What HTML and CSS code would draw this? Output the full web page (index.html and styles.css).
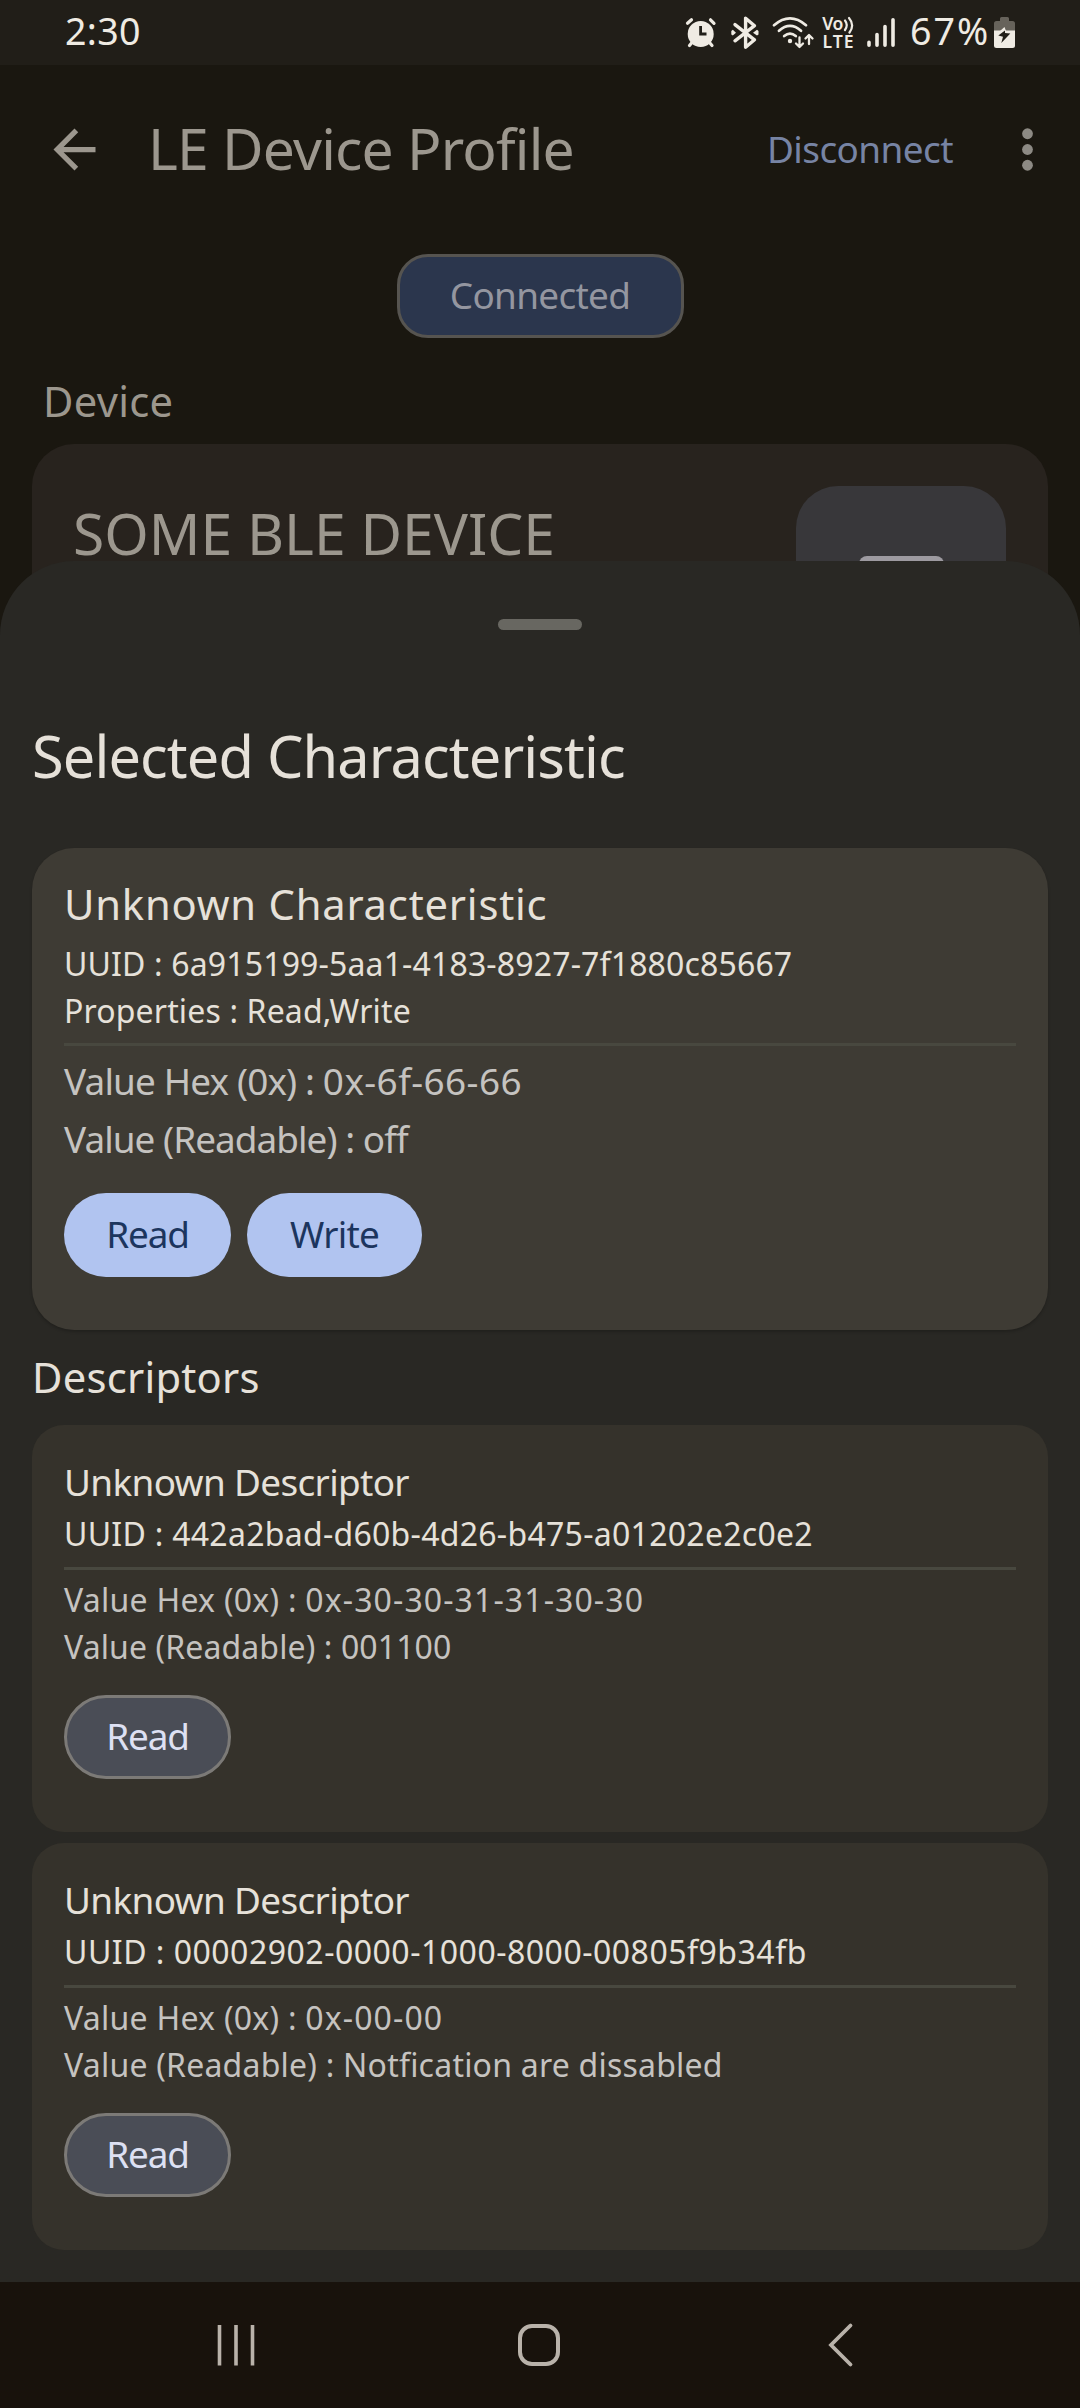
FILE: index.html
```
<!DOCTYPE html>
<html lang="en">
<head>
<meta charset="utf-8">
<title>LE Device Profile</title>
<link rel="stylesheet" href="styles.css">
</head>
<body>
<div class="screen">
  <div class="status-bar">
    <span class="clock">2:30</span>
    <div class="status-icons">
      <svg class="alarm" width="33" height="65" viewBox="684 0 33 65">
        <circle cx="700.7" cy="34" r="13" fill="#efebe3"/>
        <path d="M687.5 23.3 691.5 19.8M710.5 19.8 714 23.3M689.5 45.5 692 42.5M712 45.5 709.5 42.5" stroke="#efebe3" stroke-width="3.2" stroke-linecap="round"/>
        <path d="M700.6 26V34H706.5" fill="none" stroke="#211e18" stroke-width="2.8"/>
      </svg>
      <svg class="bluetooth" width="32" height="65" viewBox="729 0 32 65">
        <path d="M735 40.8 754.5 25.7 745.6 18.2V47.2L754.5 39.8 735 24.6" fill="none" stroke="#efebe3" stroke-width="3.4" stroke-linejoin="round" stroke-linecap="round"/>
        <path d="M731.3 31 732.8 29.8 736 32.7 732.8 35.6 731.3 34.4ZM758.5 31 757 29.8 753 32.7 757 35.6 758.5 34.4Z" fill="#efebe3"/>
      </svg>
      <svg class="wifi" width="44" height="65" viewBox="772 0 44 65" fill="none" stroke="#efebe3" stroke-width="2.8" stroke-linecap="round" stroke-linejoin="round">
        <path d="M774 25.2Q790 11.5 806 25.2M779 30.8Q790 21 801 30.8M784.2 36Q790 31.3 795.8 36"/>
        <circle cx="790" cy="41" r="2.2" fill="#efebe3" stroke="none"/>
        <path d="M799.5 37.5V46.5M796 43.5 799.5 47 803 43.5M809 44V35.5M805.5 38.5 809 35 812.5 38.5" stroke-width="2.3"/>
      </svg>
      <svg class="volte" width="36" height="65" viewBox="820 0 36 65">
        <g class="volte-text"><text x="822.3" y="30.4" textLength="21">Vo</text><text x="822.6" y="48" textLength="31">LTE</text></g>
        <path d="M845 20.5Q848.5 25 845 30M849 18Q855 25 849.5 32.5" fill="none" stroke="#efebe3" stroke-width="2.2" stroke-linecap="round"/>
      </svg>
      <svg class="signal" width="32" height="65" viewBox="865 0 32 65" stroke="#efebe3" stroke-width="3.6" stroke-linecap="round">
        <path d="M869 42.3V45.3M877 34.5V45.3M885 26.5V45.3M893 19.8V45.3"/>
      </svg>
      <span class="percent">67%</span>
      <svg class="battery" width="23" height="65" viewBox="993 0 23 65">
        <path d="M1001.500 17H1007.500A1.500 1.500 0 0 1 1009 18.500V21H1012.500A2.500 2.500 0 0 1 1015 23.500V31H994V23.500A2.500 2.500 0 0 1 996.500 21H1000V18.500A1.500 1.500 0 0 1 1001.500 17Z" fill="#67635b"/>
        <path d="M994 30.500H1015V45.500A2.500 2.500 0 0 1 1012.500 48H996.500A2.500 2.500 0 0 1 994 45.500Z" fill="#efebe3"/>
        <path d="M1004.500 27 1000 31H1006Z" fill="#efebe3"/>
        <path d="M1005 30.500 998.300 35.500 1003 36.700 1001.300 43 1010.300 33.500 1005 33Z" fill="#211e18"/>
      </svg>
    </div>
  </div>

  <div class="app-bar">
    <svg class="back" width="63" height="63" viewBox="0 0 24 24"><path d="M20 11H7.830l5.590-5.590L12 4l-8 8 8 8 1.410-1.410L7.830 13H20v-2z" fill="#9c978e"/></svg>
    <h1 class="app-title">LE Device Profile</h1>
    <span class="disconnect">Disconnect</span>
    <svg class="more" width="63" height="63" viewBox="0 0 24 24" fill="#8d8a84"><circle cx="12" cy="6" r="2.050"/><circle cx="12" cy="12" r="2.050"/><circle cx="12" cy="18" r="2.050"/></svg>
  </div>

  <div class="content">
    <div class="chip">Connected</div>
    <div class="section">Device</div>
    <div class="device-card">
      <div class="device-name">SOME BLE DEVICE</div>
      <div class="device-icon"><div class="device-glyph"></div></div>
    </div>
  </div>

  <div class="sheet">
    <div class="handle"></div>
    <h2 class="sheet-title">Selected Characteristic</h2>

    <div class="card characteristic">
      <div class="char-name">Unknown Characteristic</div>
      <div class="small uuid">UUID : 6a915199-5aa1-4183-8927-7f1880c85667</div>
      <div class="small props">Properties : Read,Write</div>
      <div class="rule"></div>
      <div class="value hex">Value Hex (0x) : <span class="bytes">0x-6f-66-66</span></div>
      <div class="value readable">Value (Readable) : off</div>
      <div class="actions">
        <button class="btn filled">Read</button>
        <button class="btn filled write">Write</button>
      </div>
    </div>

    <div class="descriptors-label">Descriptors</div>

    <div class="descriptors">
      <div class="card descriptor">
        <div class="desc-name">Unknown Descriptor</div>
        <div class="small desc-uuid">UUID : 442a2bad-d60b-4d26-b475-a01202e2c0e2</div>
        <div class="rule"></div>
        <div class="small desc-hex">Value Hex (0x) : <span class="bytes">0x-30-30-31-31-30-30</span></div>
        <div class="small desc-readable">Value (Readable) : 001100</div>
        <div class="actions"><button class="btn tonal">Read</button></div>
      </div>
      <div class="card descriptor">
        <div class="desc-name">Unknown Descriptor</div>
        <div class="small desc-uuid zeros">UUID : 00002902-0000-1000-8000-00805f9b34fb</div>
        <div class="rule"></div>
        <div class="small desc-hex">Value Hex (0x) : <span class="bytes">0x-00-00</span></div>
        <div class="small desc-readable text">Value (Readable) : Notfication are dissabled</div>
        <div class="actions"><button class="btn tonal">Read</button></div>
      </div>
    </div>
  </div>

  <div class="nav-bar">
    <svg width="42" height="46" viewBox="0 0 42 46" stroke="#b9b2aa" stroke-width="3.600"><path d="M4.500 3V43.500M21 3V43.500M37.500 3V43.500"/></svg>
    <svg width="42" height="46" viewBox="0 0 42 46" fill="none" stroke="#b9b2aa" stroke-width="4"><rect x="2" y="4" width="38" height="38" rx="12"/></svg>
    <svg width="42" height="46" viewBox="0 0 42 46" fill="none" stroke="#b9b2aa" stroke-width="3.800" stroke-linecap="round"><path d="M30.500 3.500 11 23 30.500 42.500"/></svg>
  </div>
</div>
</body>
</html>
```
FILE: styles.css
```
* { box-sizing: border-box; }

body {
  margin: 0;
  background: #1a1710;
  font-family: "Noto Sans", "Open Sans", sans-serif;
  font-weight: 400;
}

h1, h2 { margin: 0; font-weight: 400; }
svg { display: block; flex: none; }

.screen {
  position: relative;
  width: 1080px;
  height: 2408px;
  overflow: hidden;
  display: flex;
  flex-direction: column;
  background: #1a1710;
  white-space: nowrap;
}

/* Status bar */
.status-bar {
  height: 65px;
  padding: 0 64px 0 65px;
  display: flex;
  justify-content: space-between;
  background: #211e18;
  color: #efebe3;
  flex: none;
}
.clock { font-size: 37.6px; line-height: 61px; letter-spacing: 0.33px; }
.status-icons { display: flex; }
.bluetooth { margin-left: 12px; }
.wifi { margin-left: 11px; }
.volte { margin-left: 4px; }
.signal { margin-left: 9px; }
.volte-text { font-size: 17.6px; font-weight: 600; fill: #efebe3; }
.percent {
  width: 96px;
  padding-left: 13px;
  font-size: 37.6px;
  line-height: 61px;
  letter-spacing: 2px;
}

/* App bar */
.app-bar {
  height: 169px;
  flex: none;
  padding: 0 21px 0 43px;
  display: flex;
  align-items: center;
}
.app-title {
  margin-left: 42px;
  padding-bottom: 4px;
  font-size: 57px;
  line-height: 72px;
  letter-spacing: -0.8px;
  color: #9c978e;
  flex: 1;
}
.disconnect {
  padding-bottom: 2px;
  margin-right: 43px;
  font-size: 36.9px;
  line-height: 52px;
  letter-spacing: -0.55px;
  color: #7784a4;
}

/* Content behind the sheet */
.content { padding: 20px 32px 0; display: flex; flex-direction: column; flex: 1; }
.chip {
  align-self: center;
  width: 287px;
  height: 84px;
  padding-bottom: 2px;
  display: flex;
  align-items: center;
  justify-content: center;
  border: 3px solid #565450;
  border-radius: 31px;
  background: #2b364d;
  color: #9496a0;
  font-size: 36.9px;
  letter-spacing: -0.7px;
}
.section {
  margin: 35px 0 15px 11px;
  font-size: 41.7px;
  line-height: 56px;
  letter-spacing: 0.3px;
  color: #9c978e;
}
.device-card {
  height: 300px;
  padding: 42px 42px 0 41px;
  display: flex;
  justify-content: space-between;
  background: #28231e;
  border-radius: 42px;
}
.device-name {
  margin-top: 11px;
  font-size: 57px;
  line-height: 72px;
  color: #9c978e;
}
.device-icon {
  width: 210px;
  height: 210px;
  padding: 70px 62px 0 63px;
  background: #38373a;
  border-radius: 42px;
}
.device-glyph { height: 70px; border-radius: 8px; background: #9d9aa0; }

/* Bottom sheet */
.sheet {
  position: absolute;
  top: 561px;
  left: 0;
  right: 0;
  bottom: 126px;
  padding: 58px 32px 32px;
  border-radius: 74px 74px 0 0;
  background: #292824;
  color: #e6e1d9;
}
.handle { width: 84px; height: 11px; margin: 0 auto; border-radius: 6px; background: #686761; }
.sheet-title {
  margin: 90px 0 56px;
  font-size: 57.7px;
  line-height: 72px;
  letter-spacing: -0.9px;
}
.card { padding: 0 32px 53px; background: #35322b; border-radius: 32px; }
.characteristic {
  padding-top: 28px;
  background: #3e3b34;
  border-radius: 42px;
  box-shadow: 0 2px 3px rgba(0, 0, 0, 0.2);
}
.char-name { font-size: 41.7px; line-height: 56px; letter-spacing: 0.81px; }
.small { font-size: 32px; line-height: 44px; letter-spacing: 0.15px; }
.uuid { margin-top: 10px; }
.props { margin-top: 3px; }
.rule { height: 3px; margin-top: 10px; background: #48483f; }
.value { font-size: 36.9px; line-height: 52px; color: #c5c3c0; }
.hex { margin-top: 9px; letter-spacing: -0.84px; }
.hex .bytes { letter-spacing: 0.42px; }
.readable { margin-top: 6px; letter-spacing: -0.95px; }
.actions { margin-top: 28px; display: flex; gap: 16px; }
.btn {
  width: 167px;
  height: 84px;
  padding: 0 0 2px;
  border: 0;
  border-radius: 42px;
  font: inherit;
  font-size: 36.9px;
  letter-spacing: -1.1px;
}
.write { width: 175px; letter-spacing: -0.74px; }
.filled { background: #b1c4f0; color: #1c355e; }
.tonal { background: #4a4d56; color: #dde0f3; border: 3px solid #7c7a77; }

.descriptors-label {
  margin: 19px 0 20px;
  font-size: 41.7px;
  line-height: 56px;
  letter-spacing: 0.25px;
}
.descriptors { display: flex; flex-direction: column; gap: 11px; }
.descriptor { padding-top: 31px; }
.desc-name { font-size: 36.9px; line-height: 52px; letter-spacing: -0.65px; }
.desc-uuid { margin-top: 4px; letter-spacing: 0.28px; }
.zeros { letter-spacing: 0.5px; }
.descriptor .rule { margin-top: 11px; }
.desc-hex { margin-top: 8px; letter-spacing: 0.26px; color: #c5c3c0; }
.desc-hex .bytes { letter-spacing: 1.1px; }
.desc-readable { margin-top: 3px; letter-spacing: 0.11px; color: #c5c3c0; }
.text { letter-spacing: 0.22px; }
.descriptor .actions { margin-top: 26px; }

/* System navigation */
.nav-bar {
  height: 126px;
  flex: none;
  padding: 0 218px 0 215px;
  display: flex;
  align-items: center;
  justify-content: space-between;
  background: #18120c;
}
```
